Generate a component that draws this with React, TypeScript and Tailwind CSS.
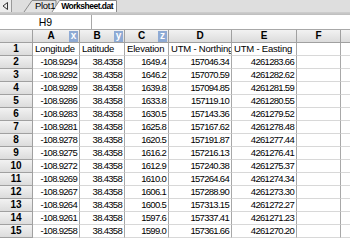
import React from 'react';

const lon = ['-108.9294', '-108.9292', '-108.9289', '-108.9286', '-108.9283', '-108.9281', '-108.9278', '-108.9275', '-108.9272', '-108.9269', '-108.9267', '-108.9264', '-108.9261', '-108.9258'];
const elev = ['1649.4', '1646.2', '1639.8', '1633.8', '1630.5', '1625.8', '1620.5', '1616.2', '1612.9', '1610.0', '1606.1', '1600.5', '1597.6', '1599.0'];
const north = ['157046.34', '157070.59', '157094.85', '157119.10', '157143.36', '157167.62', '157191.87', '157216.13', '157240.38', '157264.64', '157288.90', '157313.15', '157337.41', '157361.66'];
const east = ['4261283.66', '4261282.62', '4261281.59', '4261280.55', '4261279.52', '4261278.48', '4261277.44', '4261276.41', '4261275.37', '4261274.34', '4261273.30', '4261272.27', '4261271.23', '4261270.20'];

const cols = [
  { name: 'A', tag: 'x' },
  { name: 'B', tag: 'y' },
  { name: 'C', tag: 'z' },
  { name: 'D', tag: '' },
  { name: 'E', tag: '' },
  { name: 'F', tag: '' },
];

const labels = ['Longitude', 'Latitude', 'Elevation', 'UTM - Northing', 'UTM - Easting', ''];

const hdr = 'h-[13px] border-r border-b border-[#a0a0a0] bg-gradient-to-b from-[#f2f2f2] to-[#dcdcdc] font-bold flex items-center';
const cell = 'h-[13px] border-r border-b border-r-[#a8a8a8] border-b-[#d8d8d8] flex items-center px-[2px] whitespace-nowrap overflow-hidden';

const Tabs: React.FC = () => (
  <div className="h-[15px] flex flex-col bg-[#dedede]">
    <div className="relative h-[12px] flex items-stretch">
      <svg className="absolute left-0 top-0" width="130" height="12" viewBox="0 0 130 12">
        <path d="M24 12 L32 0.5 L56 0.5 L56 12" fill="#e2e2e2" stroke="#8a8a8a" strokeWidth="1" />
        <path d="M52 12 L59.5 0.5 L116.5 0.5 L116.5 12" fill="#ffffff" stroke="#8a8a8a" strokeWidth="1" />
      </svg>
      <div className="relative w-[12px] flex items-center justify-center border-r border-[#9a9a9a] bg-[#ececec]">
        <svg width="7" height="8" viewBox="0 0 7 8">
          <path d="M5.5 0.5 L1 4 L5.5 7.5 Z" fill="none" stroke="#333" strokeWidth="1" />
        </svg>
      </div>
      <div className="relative flex items-end pb-[1px]">
        <span className="ml-[23px] text-[9.5px] leading-[10px] tracking-[-0.3px]">Plot1</span>
        <span className="ml-[6px] text-[8.5px] leading-[10px] font-bold tracking-[-0.5px]">Worksheet.dat</span>
      </div>
    </div>
    <div className="h-[3px] bg-gradient-to-b from-[#cfcfcf] to-[#bdbdbd]" />
  </div>
);

const App: React.FC = () => {
  return (
    <div className="w-[350px] h-[240px] overflow-hidden bg-white text-[9.5px] leading-none text-black font-['Liberation_Sans',Arial,sans-serif]">
      <Tabs />
      <div className="h-[15px] flex border-b border-[#a8a8a8]">
        <div className="w-[92px] border-r border-[#a8a8a8] flex items-center justify-center text-[10.5px]">H9</div>
        <div className="flex-1" />
      </div>
      <div className="grid grid-cols-[33px_47px_45px_44px_63px_65px_44px_9px]">
        <div className={hdr} />
        {cols.map((c) => (
          <div key={c.name} className={`${hdr} justify-between text-[10px]`}>
            <span className="flex-1 text-center">{c.name}</span>
            {c.tag && (
              <span className="w-[9px] h-[11px] mr-[1px] bg-[#8eaad4] text-white flex items-center justify-center font-bold">
                {c.tag}
              </span>
            )}
          </div>
        ))}
        <div className="h-[13px] border-b border-[#a0a0a0] bg-gradient-to-b from-[#f2f2f2] to-[#dcdcdc]" />

        <div className={`${hdr} justify-center text-[10px]`}>1</div>
        {labels.map((l, i) => (
          <div key={i} className={`${cell} justify-start px-[1px] tracking-[-0.2px]`}>{l}</div>
        ))}
        <div className="h-[13px] border-b border-[#d8d8d8]" />

        {lon.map((v, i) => (
          <React.Fragment key={i}>
            <div className={`${hdr} justify-center text-[10px]`}>{i + 2}</div>
            <div className={`${cell} justify-end tracking-[-0.7px]`}>{v}</div>
            <div className={`${cell} justify-end tracking-[-0.7px]`}>38.4358</div>
            <div className={`${cell} justify-end tracking-[-0.7px]`}>{elev[i]}</div>
            <div className={`${cell} justify-end tracking-[-0.7px]`}>{north[i]}</div>
            <div className={`${cell} justify-end tracking-[-0.7px]`}>{east[i]}</div>
            <div className={cell} />
            <div className="h-[13px] border-b border-[#d8d8d8]" />
          </React.Fragment>
        ))}
      </div>
    </div>
  );
};

export default App;
